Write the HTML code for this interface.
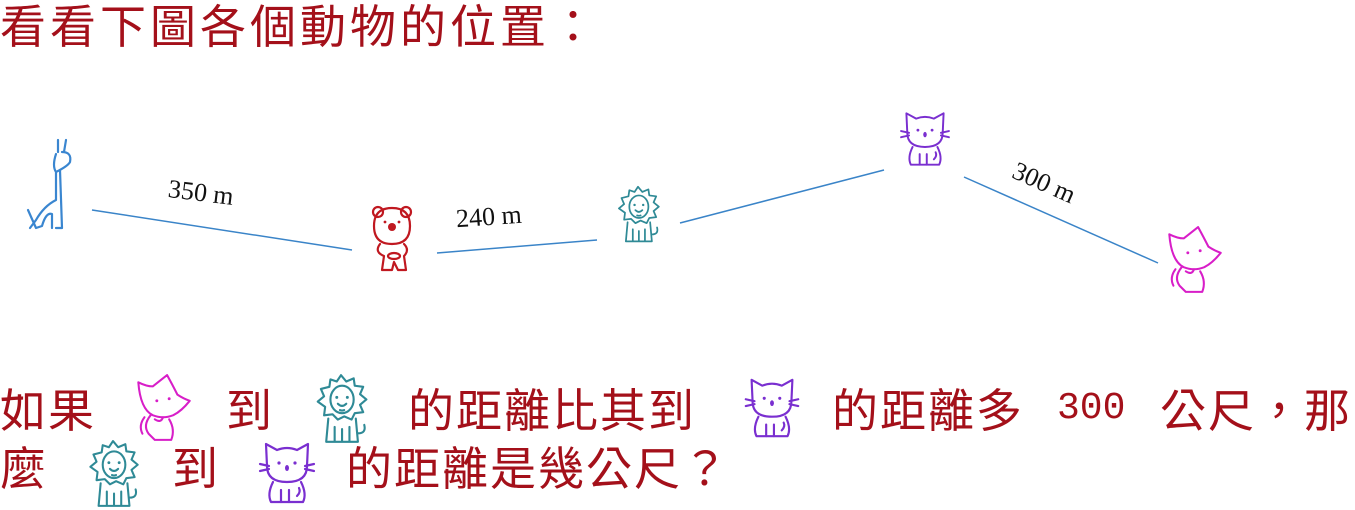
<!DOCTYPE html>
<html><head><meta charset="utf-8"><style>
body{margin:0;width:1355px;height:508px;background:#fff;position:relative;overflow:hidden;font-family:"Liberation Sans","Noto Sans CJK TC",sans-serif;}
.t{position:absolute;color:#a4101a;font-size:46px;letter-spacing:2px;line-height:1;white-space:nowrap;font-family:"Noto Sans CJK TC","WenQuanYi Zen Hei",sans-serif;}
.a{position:absolute;}
.m{position:absolute;font-family:"Liberation Serif",serif;font-size:26px;color:#111;white-space:nowrap;}
</style></head><body>
<svg width="0" height="0" style="position:absolute">
<defs>
<symbol id="cat" viewBox="0 0 60 70"><g fill="none" stroke="#7a2fd0" stroke-width="2.2" stroke-linecap="round" stroke-linejoin="round">
<path d="M10 28 L9 6 L20 12 Q30 8 40 12 L51 6 L50 28 Q50 44 30 44 Q10 44 10 28Z"/>
<path d="M3 26 L12 28 M3 33 L12 31 M57 26 L48 28 M57 33 L48 31"/>
<path d="M16 44 Q10 56 14 64 L46 64 Q50 56 44 44"/><path d="M24 64 L24 52 M32 64 L32 52 M40 58 Q44 54 42 50"/>
</g><circle cx="22" cy="25" r="1.6" fill="#7a2fd0"/><circle cx="38" cy="25" r="1.6" fill="#7a2fd0"/><ellipse cx="30" cy="30" rx="2" ry="3" fill="#7a2fd0"/></symbol>
<symbol id="lion" viewBox="0 0 60 70"><g fill="none" stroke="#2f8a96" stroke-width="2" stroke-linecap="round" stroke-linejoin="round">
<path d="M30 3 L35 9 L42 6 L43 13 L51 14 L48 21 L54 26 L48 31 L51 38 L43 39 L40 45 L33 42 L27 45 L22 40 L14 41 L15 33 L8 28 L14 23 L11 16 L19 14 L20 7 L26 9 Z"/>
<ellipse cx="31" cy="26" rx="11" ry="13"/><path d="M27 30 Q31 34 35 30 M29 36 Q31 37 33 36"/>
<path d="M18 44 L16 66 L46 66 L44 44 M24 66 L24 52 M31 66 L31 54 M38 66 L38 52 M46 58 Q54 58 52 50"/>
</g><circle cx="26" cy="24" r="1.4" fill="#2f8a96"/><circle cx="36" cy="24" r="1.4" fill="#2f8a96"/></symbol>
<symbol id="fox" viewBox="0 0 60 70"><g fill="none" stroke="#d81ec8" stroke-width="2" stroke-linecap="round" stroke-linejoin="round">
<path d="M6 10 Q14 14 20 14 L34 3 Q40 14 44 22 Q50 26 56 28 Q48 38 40 42 Q30 46 20 42 Q8 36 6 10Z"/>
<path d="M18 42 Q10 52 16 60 L22 66 L38 66 Q42 56 36 46 M22 46 Q28 50 30 44 M12 44 Q6 52 10 60"/>
</g><circle cx="24" cy="28" r="1.4" fill="#d81ec8"/><circle cx="36" cy="26" r="1.4" fill="#d81ec8"/></symbol>
</defs></svg>

<div class="t" style="left:0;top:1px;letter-spacing:4px">看看下圖各個動物的位置：</div>

<svg class="a" style="left:0;top:0" width="1355" height="330">
<g stroke="#3a84c8" stroke-width="1.5"><line x1="92" y1="210" x2="352" y2="250"/><line x1="437" y1="253" x2="597" y2="240"/><line x1="680" y1="223" x2="884" y2="170"/><line x1="964" y1="177" x2="1158" y2="263"/></g>
<g fill="none" stroke="#3a86d0" stroke-width="2.2" stroke-linecap="round" stroke-linejoin="round">
<path d="M58 140 L58 152 M66 140 L64 152 M56 154 Q52 166 56 172 L56 200 Q44 206 36 220 L30 228 M56 172 Q68 166 70 162 Q72 152 62 152 M52 228 L52 214 Q46 212 42 226 L36 228 L28 210"/>
<path d="M60 170 L62 228 L56 228"/>
</g>
<g fill="none" stroke="#c01820" stroke-width="2.2" stroke-linecap="round" stroke-linejoin="round">
<circle cx="378" cy="212" r="5"/><circle cx="406" cy="212" r="5"/>
<path d="M392 208 Q410 208 410 226 Q410 244 392 244 Q374 244 374 226 Q374 208 392 208Z"/>
<path d="M380 244 Q374 252 384 256 L382 270 L392 270 L394 262 L398 270 L406 270 L404 256 Q410 250 404 244"/>
<ellipse cx="394" cy="256" rx="6" ry="3"/>
</g>
<circle cx="392" cy="227" r="4" fill="#c01820"/><circle cx="385" cy="222" r="1.4" fill="#c01820"/><circle cx="399" cy="222" r="1.4" fill="#c01820"/>
<use href="#lion" x="612" y="184" width="52" height="61"/>
<use href="#cat" x="897" y="108" width="56" height="62"/>
<use href="#fox" x="1162" y="224" width="64" height="72"/>
</svg>
<div class="m" style="left:168px;top:178px;transform:rotate(7deg)">350 m</div>
<div class="m" style="left:456px;top:202px;transform:rotate(-4deg)">240 m</div>
<div class="m" style="left:1020px;top:156px;transform:rotate(24deg);transform-origin:left top">300 m</div>

<div class="t" style="left:0;top:385px">如果</div>
<svg class="a" style="left:128px;top:372px" width="70" height="72"><use href="#fox" width="70" height="72"/></svg>
<div class="t" style="left:226px;top:385px">到</div>
<svg class="a" style="left:308px;top:372px" width="66" height="74"><use href="#lion" width="66" height="74"/></svg>
<div class="t" style="left:408px;top:385px">的距離比其到</div>
<svg class="a" style="left:738px;top:374px" width="68" height="68"><use href="#cat" width="68" height="68"/></svg>
<div class="t" style="left:832px;top:385px">的距離多</div>
<div class="t" style="left:1057px;top:390px;font-family:'Liberation Mono',monospace;font-size:38px;letter-spacing:0">300</div>
<div class="t" style="left:1160px;top:385px">公尺，那</div>

<div class="t" style="left:0;top:443px">麼</div>
<svg class="a" style="left:82px;top:438px" width="62" height="72"><use href="#lion" width="62" height="72"/></svg>
<div class="t" style="left:172px;top:443px">到</div>
<svg class="a" style="left:252px;top:438px" width="70" height="70"><use href="#cat" width="70" height="70"/></svg>
<div class="t" style="left:346px;top:443px">的距離是幾公尺？</div>
</body></html>
